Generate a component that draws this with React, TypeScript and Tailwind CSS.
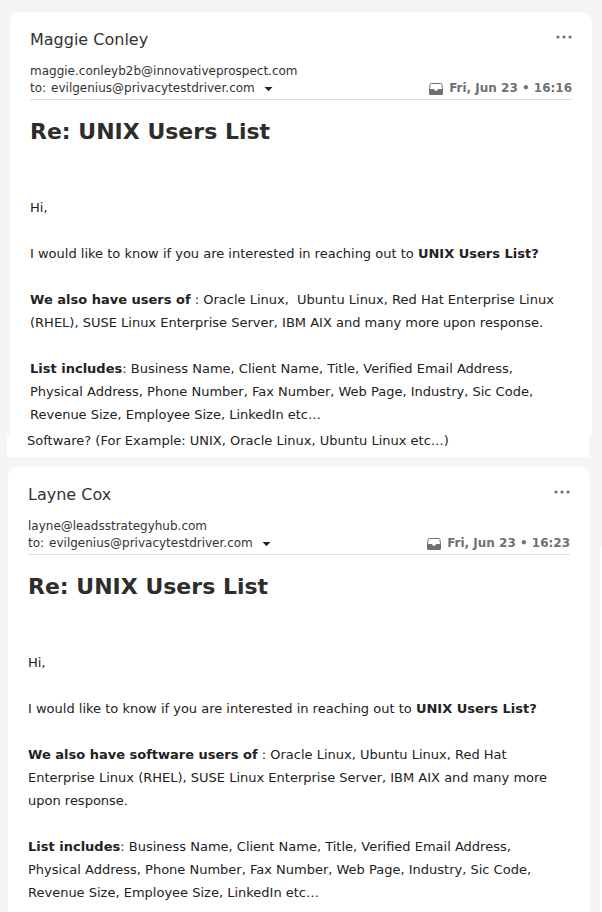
import type { ReactNode } from "react";

function InboxIcon() {
  return (
    <svg width="14" height="12" viewBox="0 0 14 12" fill="none" aria-hidden="true" className="shrink-0">
      <path
        d="M2.2.5h9.6c.6 0 1 .4 1.1 1l.6 4.8v4c0 .7-.5 1.2-1.2 1.2H1.7c-.7 0-1.2-.5-1.2-1.2v-4l.6-4.8c.1-.6.5-1 1.1-1Z"
        stroke="#707070"
      />
      <path
        d="M0 6h4.4c.5 0 .8.3 1 .7.2.7.8 1.1 1.6 1.1s1.4-.4 1.6-1.1c.2-.4.5-.7 1-.7H14v4.5c0 .9-.6 1.5-1.5 1.5h-11C.6 12 0 11.4 0 10.5V6Z"
        fill="#707070"
      />
    </svg>
  );
}

type MessageProps = {
  name: string;
  email: string;
  time: string;
  children: ReactNode;
};

function Message({ name, email, time, children }: MessageProps) {
  return (
    <article className="px-5 pt-4">
      <header className="border-b border-[#dddddd] text-[#333333]">
        <div className="flex items-start justify-between">
          <h2 className="text-base leading-6">{name}</h2>
          <button type="button" aria-label="More actions" className="flex h-[18px] items-center">
            <svg width="16" height="4" viewBox="0 0 16 4" fill="#707070" aria-hidden="true">
              <circle cx="2" cy="2" r="1.6" />
              <circle cx="8" cy="2" r="1.6" />
              <circle cx="14" cy="2" r="1.6" />
            </svg>
          </button>
        </div>
        <p className="mt-[11px] text-xs leading-[17px]">{email}</p>
        <div className="flex items-start justify-between pb-0.5 text-xs leading-[17px]">
          <div className="flex items-center">
            <span>to:</span>
            <span className="ml-[5px]">evilgenius@privacytestdriver.com</span>
            <button type="button" aria-label="Show recipients" className="ml-[9px] flex">
              <svg width="9" height="4" viewBox="0 0 9 4" fill="#222222" aria-hidden="true">
                <path d="M.5 0h8L4.9 3.8a.6.6 0 0 1-.8 0Z" />
              </svg>
            </button>
          </div>
          <div className="flex items-center gap-1.5 font-bold text-[#707070]">
            <InboxIcon />
            <time>{time}</time>
          </div>
        </div>
      </header>
      <h1 className="mt-4 text-[22px] leading-8 font-bold text-[#2d2d2d]">Re: UNIX Users List</h1>
      <div className="mt-12 space-y-[23px] pr-3 text-[13px] leading-[23px] text-[#222222]">{children}</div>
    </article>
  );
}

export default function App() {
  return (
    <div className="flex min-h-screen bg-[#f5f5f5] font-['DejaVu_Sans',sans-serif]">
      <main className="flex min-w-0 flex-1 flex-col">
        <section className="mt-3 mr-2 ml-2.5 rounded-t-[10px] bg-white pb-[9px]">
          <Message name="Maggie Conley" email="maggie.conleyb2b@innovativeprospect.com" time="Fri, Jun 23 • 16:16">
            <p>Hi,</p>
            <p>
              I would like to know if you are interested in reaching out to <b>UNIX Users List?</b>
            </p>
            <p>
              <b>We also have users of</b> : Oracle Linux,&nbsp; Ubuntu Linux, Red Hat Enterprise Linux (RHEL), SUSE
              Linux Enterprise Server, IBM AIX and many more upon response.
            </p>
            <p>
              <b>List includes</b>: Business Name, Client Name, Title, Verified Email Address, Physical Address, Phone
              Number, Fax Number, Web Page, Industry, Sic Code, Revenue Size, Employee Size, LinkedIn etc…
            </p>
          </Message>
        </section>
        <p className="mr-[11px] ml-[7px] bg-white pb-2.5 pl-5 text-[13px] leading-3 text-[#222222]">
          Software? (For Example: UNIX, Oracle Linux, Ubuntu Linux etc…)
        </p>
        <section className="mt-2.5 mr-2.5 ml-2 flex-1 rounded-t-[10px] bg-white">
          <Message name="Layne Cox" email="layne@leadsstrategyhub.com" time="Fri, Jun 23 • 16:23">
            <p>Hi,</p>
            <p>
              I would like to know if you are interested in reaching out to <b>UNIX Users List?</b>
            </p>
            <p>
              <b>We also have software users of</b> : Oracle Linux, Ubuntu Linux, Red Hat Enterprise Linux (RHEL), SUSE
              Linux Enterprise Server, IBM AIX and many more upon response.
            </p>
            <p>
              <b>List includes</b>: Business Name, Client Name, Title, Verified Email Address, Physical Address, Phone
              Number, Fax Number, Web Page, Industry, Sic Code, Revenue Size, Employee Size, LinkedIn etc…
            </p>
          </Message>
        </section>
      </main>
      <div className="mt-[547px] w-0.5 bg-white" />
    </div>
  );
}
